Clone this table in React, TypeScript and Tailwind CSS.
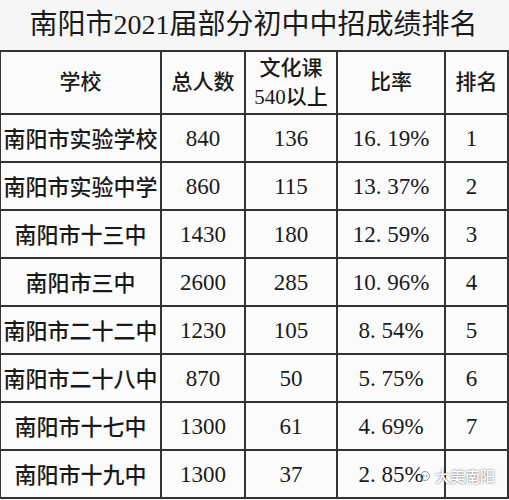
const rows = [
  { school: '南阳市实验学校', total: '840', pass: '136', rate: '16. 19%', rank: '1' },
  { school: '南阳市实验中学', total: '860', pass: '115', rate: '13. 37%', rank: '2' },
  { school: '南阳市十三中', total: '1430', pass: '180', rate: '12. 59%', rank: '3' },
  { school: '南阳市三中', total: '2600', pass: '285', rate: '10. 96%', rank: '4' },
  { school: '南阳市二十二中', total: '1230', pass: '105', rate: '8. 54%', rank: '5' },
  { school: '南阳市二十八中', total: '870', pass: '50', rate: '5. 75%', rank: '6' },
  { school: '南阳市十七中', total: '1300', pass: '61', rate: '4. 69%', rank: '7' },
  { school: '南阳市十九中', total: '1300', pass: '37', rate: '2. 85%', rank: '' },
];

const font = { fontFamily: '"Liberation Serif", "Noto Sans CJK SC", serif' };

export default function App() {
  return (
    <div className="relative h-[500px] w-[509px] overflow-hidden bg-[#f6f6f6] font-medium text-[#1a1a1a]" style={font}>
      <h1 className="flex h-[50px] items-center justify-center pr-[2px] text-[28px] leading-none font-normal">
        南阳市2021届部分初中中招成绩排名
      </h1>
      <div className="grid grid-cols-[161px_84px_92px_108px_63px] border-t-2 border-l border-[#333] bg-[#fbfbfb]">
        <div className="flex h-[63px] items-center justify-center border-r-2 border-b-2 border-[#333] text-[21px]">学校</div>
        <div className="flex h-[63px] items-center justify-center border-r-2 border-b-2 border-[#333] text-[21px]">总人数</div>
        <div className="flex h-[63px] flex-col items-center justify-center border-r-2 border-b-2 border-[#333] text-[21px] leading-[29px]">
          <span>文化课</span>
          <span>540以上</span>
        </div>
        <div className="flex h-[63px] items-center justify-center border-r-2 border-b-2 border-[#333] text-[21px]">比率</div>
        <div className="flex h-[63px] items-center justify-center border-r-2 border-b-2 border-[#333] text-[21px]">排名</div>
        {rows.map((r) => (
          <Row key={r.school} {...r} />
        ))}
      </div>
      <div className="absolute right-[14px] bottom-[13px] flex items-center gap-[4px] text-[15px] text-white [text-shadow:0_0_2px_#555]">
        <svg width="12" height="12" viewBox="0 0 12 12" fill="none" stroke="#999" strokeWidth="1">
          <circle cx="6" cy="6" r="4.5" />
          <circle cx="4.5" cy="6" r="0.6" fill="#999" />
          <circle cx="7.5" cy="6" r="0.6" fill="#999" />
        </svg>
        <span style={{ fontFamily: '"Noto Sans CJK SC", sans-serif' }}>大美南阳</span>
      </div>
    </div>
  );
}

function Row({ school, total, pass, rate, rank }: (typeof rows)[number]) {
  const cell = 'flex h-[48px] items-center justify-center border-r-2 border-b-2 border-[#333] pt-[3px]';
  return (
    <>
      <div className={`${cell} text-[22px]`}>{school}</div>
      <div className={`${cell} text-[23px]`}>{total}</div>
      <div className={`${cell} text-[23px]`}>{pass}</div>
      <div className={`${cell} text-[23px]`}>{rate}</div>
      <div className={`${cell} pr-[10px] text-[23px]`}>{rank}</div>
    </>
  );
}
